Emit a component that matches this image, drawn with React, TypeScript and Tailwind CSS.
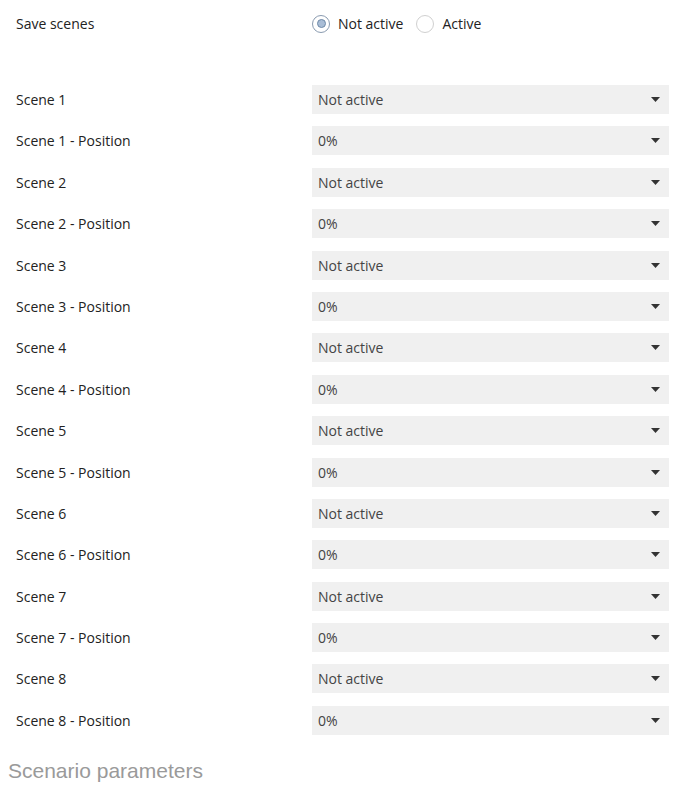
import React from "react";

const SCENES = [1, 2, 3, 4, 5, 6, 7, 8];

const Arrow = () => (
	<svg width="9" height="5" viewBox="0 0 9 5" className="shrink-0">
		<path d="M0 0h9L4.5 5z" fill="#333" />
	</svg>
);

const Select = ({ value }: { value: string }) => (
	<div className="h-[29px] bg-[#f0f0f0] flex items-center justify-between pl-[6px] pr-[9px] text-[#444]">
		<span>{value}</span>
		<Arrow />
	</div>
);

const Radio = ({ checked }: { checked: boolean }) => (
	<span
		className={`w-[18px] h-[18px] rounded-full border flex items-center justify-center ${
			checked ? "border-[#8a9bb0] bg-white" : "border-[#d0d0d0] bg-white"
		}`}
	>
		{checked && (
			<span className="w-[9px] h-[9px] rounded-full bg-[#a9bdd6] border border-[#6f8aa8]" />
		)}
	</span>
);

export default function App() {
	const rows: { label: string; value: string }[] = [];
	SCENES.forEach((n) => {
		rows.push({ label: `Scene ${n}`, value: "Not active" });
		rows.push({ label: `Scene ${n} - Position`, value: "0%" });
	});

	return (
		<div
			className="bg-white w-[683px] h-[792px] text-[14px] text-[#222]"
			style={{ fontFamily: '"Open Sans", "Noto Sans", sans-serif' }}
		>
			<div className="pt-[9px] pl-4 w-[669px]">
				<div className="grid grid-cols-[296px_1fr] h-[29px] items-center">
					<span>Save scenes</span>
					<div className="flex items-center text-[#222]">
						<Radio checked />
						<span className="ml-[8px]">Not active</span>
						<span className="ml-[13px]">
							<Radio checked={false} />
						</span>
						<span className="ml-[8px]">Active</span>
					</div>
				</div>

				<div className="mt-[47px] grid grid-cols-[296px_1fr] gap-y-[12.4px] items-center">
					{rows.map(({ label, value }) => (
						<React.Fragment key={label}>
							<span>{label}</span>
							<Select value={value} />
						</React.Fragment>
					))}
				</div>
			</div>

			<div
				className="pl-2 mt-[20px] text-[21px] text-[#9a9a9a]"
				style={{ fontFamily: '"Liberation Sans", Arial, sans-serif' }}
			>
				Scenario parameters
			</div>
		</div>
	);
}
